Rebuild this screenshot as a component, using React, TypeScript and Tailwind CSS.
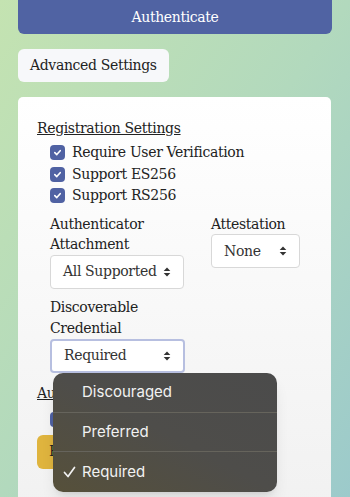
import React from 'react';

const serif = { fontFamily: '"DejaVu Serif", "Liberation Serif", serif', letterSpacing: '-0.35px' };

const Arrows = () => (
    <svg width="8" height="10" viewBox="0 0 8 10" className="text-[#333] shrink-0">
        <path d="M4 0.5 L7.3 4 H0.7 Z" fill="currentColor" />
        <path d="M4 9.5 L7.3 6 H0.7 Z" fill="currentColor" />
    </svg>
);

const Check = () => (
    <span className="w-[15px] h-[15px] rounded-[4px] bg-[#5062a3] flex items-center justify-center shrink-0">
        <svg width="9" height="9" viewBox="0 0 10 10">
            <path d="M2 5.2 L4.2 7.3 L8 3" stroke="white" strokeWidth="1.8" fill="none" strokeLinecap="round" strokeLinejoin="round" />
        </svg>
    </span>
);

const Select = ({ value, width, focus }: { value: string; width: string; focus?: boolean }) => (
    <div
        className={`${width} h-[34px] bg-white rounded-[4px] flex items-center justify-between pl-3 pr-3 ${
            focus ? 'border-2 border-[#b7bfe0]' : 'border border-[#d8d8d8]'
        }`}
    >
        <span className="text-[14px] text-[#333]">{value}</span>
        <Arrows />
    </div>
);

const options = ['Discouraged', 'Preferred', 'Required'];

export default function App() {
    return (
        <div
            className="relative w-[350px] h-[497px] overflow-hidden bg-gradient-to-br from-[#c4e3b1] via-[#b2d9bd] to-[#9ccacb] px-[18px] text-[#222]"
            style={serif}
        >
            <button className="w-[314px] h-[34px] rounded-b-[6px] bg-[#5063a3] text-white text-[14px]">
                Authenticate
            </button>

            <div className="mt-[15px]">
                <button className="h-[33px] px-3 rounded-[6px] bg-[#f7f8fa] text-[14px] text-[#222]">
                    Advanced Settings
                </button>
            </div>

            <div className="mt-[15px] w-[313px] h-[420px] rounded-t-[5px] bg-gradient-to-b from-white to-[#f1f1f1] pl-[19px] pt-[21px]">
                <div className="text-[14px] underline leading-[21px]">Registration Settings</div>
                <div className="ml-[13px] mt-[3px] flex flex-col">
                    {['Require User Verification', 'Support ES256', 'Support RS256'].map((t) => (
                        <div key={t} className="flex items-center gap-[7px] h-[21.5px] text-[14px]">
                            <Check />
                            <span>{t}</span>
                        </div>
                    ))}
                </div>

                <div className="ml-[13px] mt-[7px] flex gap-[27px]">
                    <div className="flex flex-col">
                        <div className="text-[14px] leading-[20.5px]">
                            Authenticator
                            <br />
                            Attachment
                        </div>
                        <div className="mt-[0px]">
                            <Select value="All Supported" width="w-[134px]" />
                        </div>
                    </div>
                    <div className="flex flex-col">
                        <div className="text-[14px] leading-[20.5px]">Attestation</div>
                        <div className="mt-[0px]">
                            <Select value="None" width="w-[89px]" />
                        </div>
                    </div>
                </div>

                <div className="ml-[13px] mt-[8px]">
                    <div className="text-[14px] leading-[21px]">
                        Discoverable
                        <br />
                        Credential
                    </div>
                    <div className="mt-[0px]">
                        <Select value="Required" width="w-[135px]" focus />
                    </div>
                </div>

                <div className="mt-[10px] text-[14px] underline leading-[21px]">Authentication Settings</div>
                <div className="ml-[13px] mt-[5px] flex items-center gap-[7px] h-[21px] text-[14px]">
                    <Check />
                    <span>User Verification</span>
                </div>
                <button className="mt-[5px] h-[34px] px-3 rounded-[6px] bg-[#dfb43e] text-[14px] text-[#222]">
                    Register
                </button>
            </div>

            <div
                className="absolute left-[53px] top-[373px] w-[224px] h-[119px] rounded-[10px] bg-gradient-to-tr from-[#56503a] via-[#4e4d4a] to-[#4b4b4b] shadow-lg text-white"
                style={{ fontFamily: 'Inter, "Open Sans", sans-serif', letterSpacing: '0' }}
            >
                {options.map((o, i) => (
                    <div
                        key={o}
                        className={`h-[39.5px] flex items-center pl-[29px] relative text-[15px] text-[#f2f2f2] ${
                            i < 2 ? 'border-b border-[#66645c]' : ''
                        }`}
                    >
                        {o === 'Required' && (
                            <svg width="13" height="12" viewBox="0 0 13 12" className="absolute left-[10px]">
                                <path d="M1.5 6.5 L5 10.5 L11.5 1.5" stroke="#f2f2f2" strokeWidth="1.7" fill="none" strokeLinecap="round" strokeLinejoin="round" />
                            </svg>
                        )}
                        {o}
                    </div>
                ))}
            </div>
        </div>
    );
}
